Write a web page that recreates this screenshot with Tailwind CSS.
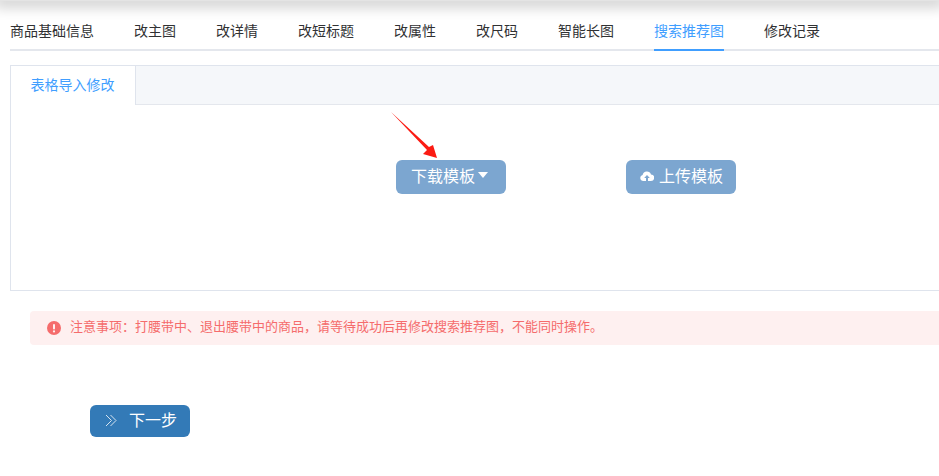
<!DOCTYPE html>
<html lang="zh">
<head>
<meta charset="utf-8">
<script src="https://cdn.jsdelivr.net/npm/@tailwindcss/browser@4"></script>
</head>
<body class="bg-white overflow-hidden h-[476px] w-[939px] relative font-['Liberation_Sans','Noto_Sans_CJK_SC',sans-serif]">
<div class="h-[1px] shadow-[0_0_14px_6px_rgba(0,0,0,0.2)] bg-[#e4e4e4] w-full"></div>
<div class="w-[1200px] pl-[10px] pt-[19px]">
  <nav class="flex gap-10 h-[31px] border-b-2 border-[#e4e7ed] text-sm text-[#303133] leading-[22px]">
    <span class="h-[31px]">商品基础信息</span>
    <span class="h-[31px]">改主图</span>
    <span class="h-[31px]">改详情</span>
    <span class="h-[31px]">改短标题</span>
    <span class="h-[31px]">改属性</span>
    <span class="h-[31px]">改尺码</span>
    <span class="h-[31px]">智能长图</span>
    <span class="h-[31px] text-[#409eff] border-b-2 border-[#409eff]">搜索推荐图</span>
    <span class="h-[31px]">修改记录</span>
  </nav>
  <section class="mt-[14px] h-[226px] border border-[#dfe4ed] bg-white">
    <div class="flex h-[39px] bg-[#f5f7fa] border-b border-[#e4e7ed]">
      <div class="w-[125px] h-[39px] pb-[2px] pr-px bg-white border-r border-[#dfe4ed] text-[#409eff] text-sm flex items-center justify-center">表格导入修改</div>
    </div>
    <div class="relative flex pt-[55px] pl-[385px] gap-[120px]">
      <svg class="absolute left-[378px] top-[6px]" width="50" height="48" viewBox="0 0 50 48"><path d="M2 1 L40 36 L44 34 L48 47 L34 43 L38 39 Z" fill="#fb1b13"/></svg>
      <button class="w-[110px] h-[34px] rounded-md bg-[#7ca6d0] text-white text-base flex items-center pl-[15px]">下载模板<span class="ml-[3px] mb-[4px] w-0 h-0 border-x-[5.5px] border-x-transparent border-t-[6px] border-t-white"></span></button>
      <button class="w-[110px] h-[34px] rounded-md bg-[#7ca6d0] text-white text-base flex items-center pl-[14px] gap-[5px]">
        <svg width="14" height="12" viewBox="0 0 14 11" class="mb-[2px]"><path fill="#fff" fill-rule="evenodd" d="M3.4 10.5A3.1 3.1 0 0 1 2.6 4.4 4.4 4.4 0 0 1 11 3.9 3.3 3.3 0 0 1 10.7 10.5H8V7.4H9.8L7 4.4 4.2 7.4H6V10.5Z"/></svg>
        上传模板</button>
    </div>
  </section>
  <div class="ml-[20px] mt-[20px] h-[34px] rounded-l bg-[#fef0f0] text-[#f56c6c] text-[13px] flex items-center pl-[17px] gap-[9px]">
    <svg width="14" height="14" viewBox="0 0 14 14"><circle cx="7" cy="7" r="7" fill="#f56c6c"/><rect x="6" y="3" width="2" height="5.5" rx="1" fill="#fef0f0"/><circle cx="7" cy="10.4" r="1.1" fill="#fef0f0"/></svg>
    <span class="pb-[2px]">注意事项：打腰带中、退出腰带中的商品，请等待成功后再修改搜索推荐图，不能同时操作。</span>
  </div>
  <button class="ml-[80px] mt-[60px] w-[100px] h-[32px] rounded-md bg-[#337ab7] text-white text-base flex items-center pl-[15px] gap-[12px]">
    <svg width="12" height="13" viewBox="0 0 12 13" fill="none" stroke="#d6e4f0" stroke-width="1" class="mb-[2px]"><path d="M1 1 L6.5 6.5 L1 12"/><path d="M5.5 1 L11 6.5 L5.5 12"/></svg>
    下一步</button>
</div>
</body>
</html>
